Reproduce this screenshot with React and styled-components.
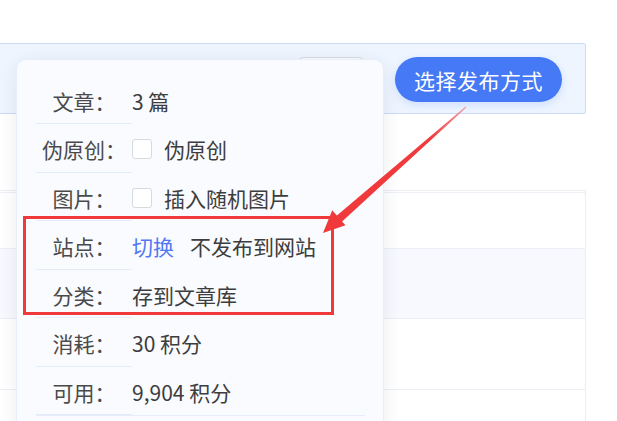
import React from 'react';
import styled, { createGlobalStyle } from 'styled-components';

const GlobalStyle = createGlobalStyle`
  html, body {
    margin: 0;
    padding: 0;
    background: #fff;
    font-family: "Noto Sans CJK SC", "Noto Sans", sans-serif;
    overflow: hidden;
  }
`;

const Page = styled.div`
  position: relative;
  width: 617px;
  height: 421px;
  overflow: hidden;
  padding-top: 43px;
  box-sizing: border-box;
`;

const Main = styled.div`
  width: 586px;
`;

const Toolbar = styled.div`
  height: 71px;
  box-sizing: border-box;
  background: #eef5ff;
  border: 1px solid #c8dcf8;
  border-left: none;
  border-radius: 0 3px 3px 0;
  display: flex;
  align-items: center;
  justify-content: flex-end;
  gap: 29px;
  padding: 2px 23px 0 0;
`;

const GhostButton = styled.button`
  width: 70px;
  height: 45px;
  border: 1px solid #d4d8e0;
  border-radius: 8px;
  background: #fff;
`;

const PrimaryButton = styled.button`
  height: 45px;
  padding: 0 19px;
  border: none;
  border-radius: 23px;
  background: #4579f5;
  color: #fff;
  font-family: inherit;
  font-size: 21px;
  letter-spacing: 0.5px;
  box-shadow: 0 3px 8px rgba(69, 121, 245, 0.18);
`;

const Table = styled.div`
  margin-top: 76px;
  border-top: 1px solid #eceef4;
  border-right: 1px solid #eceef5;
  padding-top: 1px;
`;

const TableRow = styled.div`
  height: ${p => p.h}px;
  background: ${p => (p.striped ? '#f7f9fe' : '#fff')};
  border-top: 1px solid #eceff5;
`;

const Popover = styled.div`
  position: absolute;
  left: 16px;
  top: 59px;
  width: 368px;
  height: 400px;
  box-sizing: border-box;
  background: #f9fbff;
  border: 1px solid #e7eefa;
  border-radius: 10px;
  box-shadow: 0 4px 18px rgba(40, 50, 80, 0.09);
  padding: 16px 18px 0 19px;
`;

const Row = styled.div`
  display: flex;
  align-items: center;
  height: 48.5px;
  box-sizing: border-box;
  border-bottom: 1px solid ${p => (p.full ? '#e8eef9' : 'transparent')};
  font-size: 21px;
  color: #3d3d3d;
`;

const Label = styled.div`
  width: 96px;
  height: 100%;
  flex-shrink: 0;
  display: flex;
  align-items: center;
  justify-content: center;
  padding-top: 2px;
  box-sizing: border-box;
  color: #4a4a4a;
  border-bottom: 1px solid #e3ecfa;
  margin-bottom: -1px;
`;

const Value = styled.div`
  display: flex;
  align-items: center;
  gap: 12px;
  padding-top: 2px;
  white-space: nowrap;
`;

const Check = styled.span`
  width: 18px;
  height: 18px;
  border: 1px solid #d6d9df;
  border-radius: 3px;
  background: #fff;
`;

const Link = styled.span`
  color: #5078f2;
  margin-right: 4px;
`;

const Highlight = styled.div`
  position: absolute;
  left: 23px;
  top: 216px;
  width: 311px;
  height: 99px;
  box-sizing: border-box;
  border: 3px solid #f0393b;
`;

const Overlay = styled.svg`
  position: absolute;
  left: 0;
  top: 0;
  pointer-events: none;
`;

const rows = [
  { label: '文章：', value: '3 篇' },
  { label: '伪原创：', value: '伪原创', check: true },
  { label: '图片：', value: '插入随机图片', check: true },
  { label: '站点：', value: '不发布到网站', link: '切换' },
  { label: '分类：', value: '存到文章库' },
  { label: '消耗：', value: '30 积分' },
  { label: '可用：', value: '9,904 积分', full: true },
];

export default function App() {
  return (
    <>
      <GlobalStyle />
      <Page>
        <Main>
          <Toolbar>
            <GhostButton />
            <PrimaryButton>选择发布方式</PrimaryButton>
          </Toolbar>
          <Table>
            <TableRow h={55} />
            <TableRow h={69} striped />
            <TableRow h={70} />
            <TableRow h={70} />
          </Table>
        </Main>

        <Popover>
          {rows.map(r => (
            <Row key={r.label} full={r.full}>
              <Label>{r.label}</Label>
              <Value>
                {r.check && <Check />}
                {r.link && <Link>{r.link}</Link>}
                {r.value}
              </Value>
            </Row>
          ))}
        </Popover>

        <Highlight />
        <Overlay width="617" height="421" viewBox="0 0 617 421">
          <defs>
            <linearGradient id="fade" x1="466" y1="107" x2="323" y2="233" gradientUnits="userSpaceOnUse">
              <stop offset="0" stopColor="#f5a0a4" />
              <stop offset="0.25" stopColor="#f03a3c" />
              <stop offset="1" stopColor="#f0393b" />
            </linearGradient>
          </defs>
          <polygon
            fill="url(#fade)"
            points="466.4,107.4 342.1,221.5 345.5,225.3 323,233 332.2,210.3 336.9,215.5 465.6,106.6"
          />
        </Overlay>
      </Page>
    </>
  );
}
